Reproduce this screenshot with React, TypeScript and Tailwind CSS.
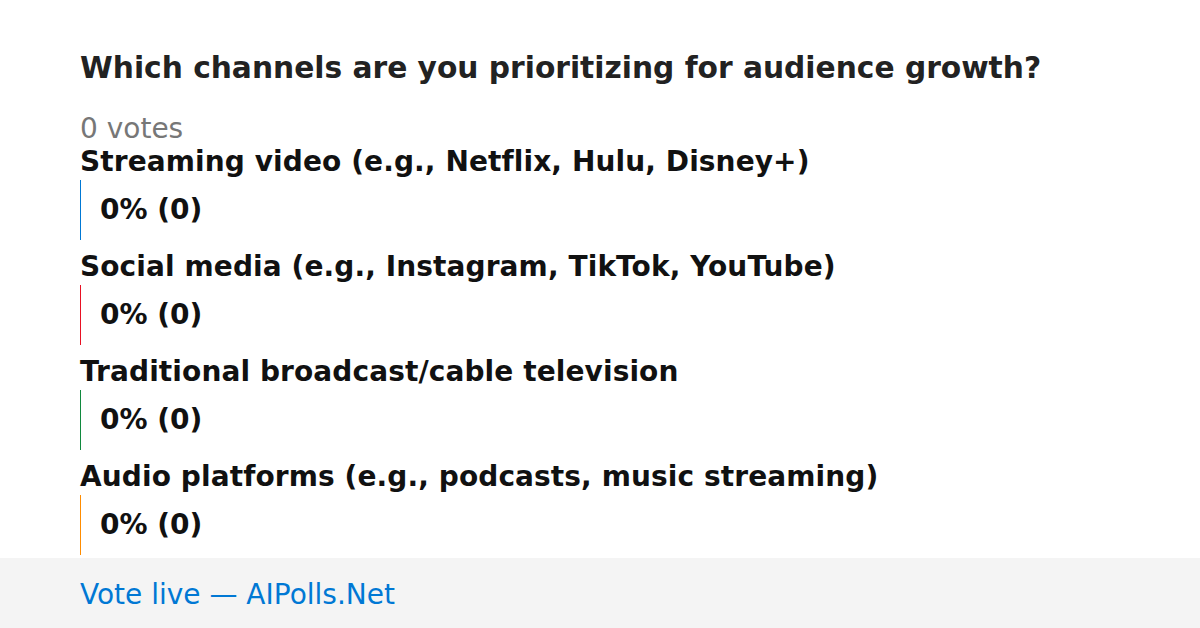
const options = [
  { label: 'Streaming video (e.g., Netflix, Hulu, Disney+)', bar: 'border-[#0078d4]' },
  { label: 'Social media (e.g., Instagram, TikTok, YouTube)', bar: 'border-[#e81123]' },
  { label: 'Traditional broadcast/cable television', bar: 'border-[#10893e]' },
  { label: 'Audio platforms (e.g., podcasts, music streaming)', bar: 'border-[#ff8c00]' },
]

export default function App() {
  return (
    <div className="flex h-[628px] w-[1200px] flex-col overflow-hidden bg-white font-['DejaVu_Sans',sans-serif]">
      <main className="flex-1 px-20 pt-[51px]">
        <h1 className="h-[34px] text-[29.7px] leading-[34px] font-bold text-[#222]">
          Which channels are you prioritizing for audience growth?
        </h1>
        <p className="mt-[27px] h-[30px] text-[28px] leading-[34px] text-[#777]">0 votes</p>
        <div className="mt-[3px]">
          {options.map((o) => (
            <div key={o.label} className="pb-[10px] last:pb-[3px]">
              <div className="h-[30px] text-[28px] leading-[34px] font-bold tracking-[0.1px] text-[#111]">{o.label}</div>
              <div className={`mt-[5px] flex h-[60px] items-center border-l pl-[19px] ${o.bar}`}>
                <span className="text-[28px] leading-[30px] font-bold text-[#111]">0% (0)</span>
              </div>
            </div>
          ))}
        </div>
      </main>
      <footer className="flex h-[70px] items-center bg-[#f4f4f4] px-20 pt-1">
        <span className="text-[28px] leading-[30px] text-[#0078d4]">Vote live — AIPolls.Net</span>
      </footer>
    </div>
  )
}
